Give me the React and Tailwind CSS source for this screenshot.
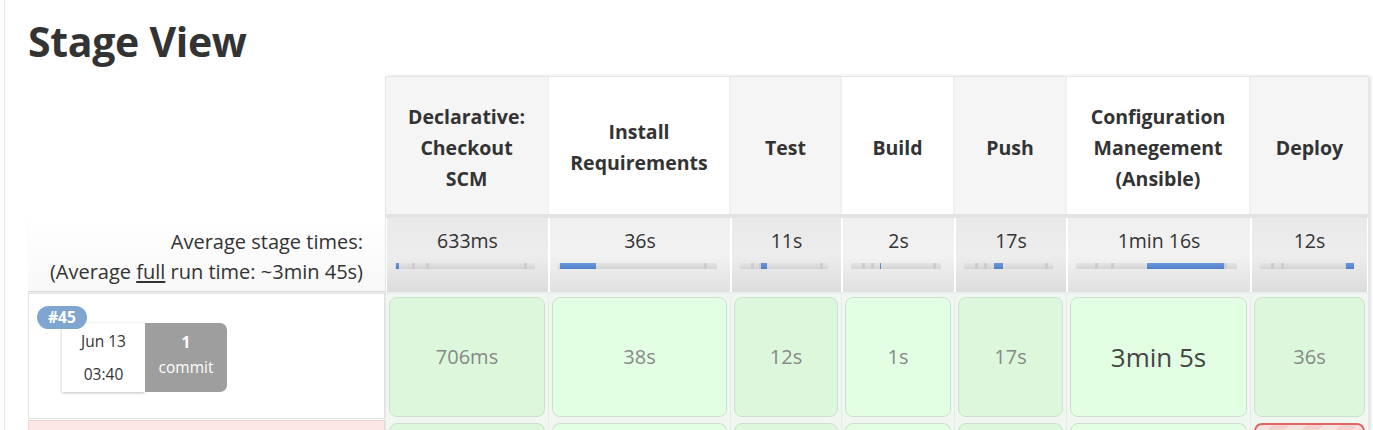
import React from "react";

const stages = [
  { name: ["Declarative:", "Checkout", "SCM"], w: "w-[163px]", head: "bg-[#f5f5f5]", avg: "633ms", bar: [1, 2], run: "706ms", dark: true },
  { name: ["Install", "Requirements"], w: "w-[182px]", head: "bg-white", avg: "36s", bar: [1, 23], run: "38s", dark: false },
  { name: ["Test"], w: "w-[111px]", head: "bg-[#f5f5f5]", avg: "11s", bar: [24, 7], run: "12s", dark: true },
  { name: ["Build"], w: "w-[113px]", head: "bg-white", avg: "2s", bar: [32, 1], run: "1s", dark: false },
  { name: ["Push"], w: "w-[112px]", head: "bg-[#f5f5f5]", avg: "17s", bar: [34, 10], run: "17s", dark: true },
  { name: ["Configuration", "Manegement", "(Ansible)"], w: "w-[184px]", head: "bg-white", avg: "1min 16s", bar: [44, 48], run: "3min 5s", dark: false, big: true },
  { name: ["Deploy"], w: "w-[117px]", head: "bg-[#f5f5f5]", avg: "12s", bar: [92, 8], run: "36s", dark: true, failNext: true },
];

function Bar({ left, width }) {
  return (
    <div className="relative h-[6px] ml-[8px] mr-[13px] bg-gradient-to-b from-[#e4e4e4] to-[#d4d4d4]">
      <div className="absolute top-0 bottom-0 left-[12%] w-[3px] bg-[#cdcdcd]" />
      <div className="absolute top-0 bottom-0 left-[22%] w-[3px] bg-[#cdcdcd]" />
      <div className="absolute top-0 bottom-0 right-[6%] w-[3px] bg-[#cdcdcd]" />
      <div
        className="absolute top-0 bottom-0 bg-gradient-to-b from-[#6b98dc] to-[#4f7fc9]"
        style={{ left: `${left}%`, width: `${width}%`, minWidth: "1px" }}
      />
    </div>
  );
}

export default function App() {
  return (
    <div
      className="h-[430px] overflow-hidden bg-white pl-[4px] text-[#333]"
      style={{ fontFamily: '"Open Sans", "Noto Sans", sans-serif' }}
    >
      <div className="h-full border-l border-[#e4ebee] pl-[23px]">
        <h2 className="pt-[15px] h-[76px] text-[41px] font-bold leading-[52px] tracking-[-0.3px]">
          Stage View
        </h2>

        <div className="flex">
          {/* left column */}
          <div className="w-[357px] shrink-0">
            <div className="h-[142px]" />
            <div className="h-[74px] border-b border-[#d8d8d8] bg-gradient-to-b from-white to-[#f8f8f8] pr-[22px] pt-[9px] text-right text-[20px] leading-[30px] shadow-[0_1px_1px_rgba(0,0,0,0.06)]">
              <div>Average stage times:</div>
              <div>
                (Average <span className="underline underline-offset-2">full</span> run time: ~3min 45s)
              </div>
            </div>
            <div className="relative mt-[1px] h-[126px] border border-[#e2e2e2] bg-white">
              <span className="absolute left-[8px] top-[12px] z-10 rounded-full bg-[#7fa6d1] px-[11px] text-[15.5px] font-bold leading-[23px] text-white">
                #45
              </span>
              <div className="absolute left-[33px] top-[29px] flex h-[69px]">
                <div className="flex w-[83px] flex-col items-center justify-center gap-[8px] bg-white text-[15.5px] leading-[25px] shadow-[0_1px_3px_rgba(0,0,0,0.25)]">
                  <span>Jun 13</span>
                  <span>03:40</span>
                </div>
                <div className="flex w-[82px] flex-col items-center justify-center rounded-r-[7px] bg-[#9e9e9e] pb-[6px] text-[15.5px] leading-[25px] text-white">
                  <span className="font-bold">1</span>
                  <span>commit</span>
                </div>
              </div>
            </div>
            <div className="mt-[1px] h-[126px] border border-[#f0d6d2] bg-[#fde7e4]" />
          </div>

          {/* stage table */}
          <div className="shrink-0 border border-[#e1e7ea] bg-white shadow-[2px_0_3px_rgba(0,0,0,0.12)]">
            <div className="flex border-b-[4px] border-[#e3e3e3]">
              {stages.map((s, i) => (
                <div
                  key={i}
                  className={`${s.w} ${s.head} flex h-[137px] flex-col items-center justify-center border-r-2 border-[#f0f0f0] pt-[3px] text-center text-[19.5px] font-bold leading-[31px] last:border-r-0`}
                >
                  {s.name.map((n) => (
                    <span key={n}>{n}</span>
                  ))}
                </div>
              ))}
            </div>

            <div className="flex">
              {stages.map((s, i) => (
                <div
                  key={i}
                  className={`${s.w} h-[74px] border-x border-white bg-gradient-to-b ${
                    s.dark ? "from-[#e9e9e9] via-[#ededed] to-[#dcdcdc]" : "from-[#efefef] via-[#f2f2f2] to-[#e0e0e0]"
                  } pt-[10px] text-center`}
                >
                  <div className="text-[19.5px] leading-[26px]">{s.avg}</div>
                  <div className="mt-[9px]">
                    <Bar left={s.bar[0]} width={s.bar[1]} />
                  </div>
                </div>
              ))}
            </div>

            <div className="flex border-t-2 border-[#eeeeee]">
              {stages.map((s, i) => (
                <div key={i} className={`${s.w} h-[126px] border-r border-[#e9e9e9] bg-[#f0f7f0] p-[3px] last:border-r-0`}>
                  <div
                    className={`flex h-full items-center justify-center rounded-[8px] border border-[#cfdfcf] ${
                      s.dark ? "bg-[#dcf7dc]" : "bg-[#e3ffe3]"
                    } ${s.big ? "text-[26px] text-[#444]" : "text-[20px] text-[#888]"}`}
                  >
                    {s.run}
                  </div>
                </div>
              ))}
            </div>

            <div className="flex">
              {stages.map((s, i) => (
                <div key={i} className={`${s.w} h-[126px] border-r border-[#e9e9e9] bg-[#f0f7f0] p-[3px] last:border-r-0`}>
                  <div
                    className={`h-full rounded-[8px] border ${
                      s.failNext
                        ? "border-2 border-[#e06666] bg-[repeating-linear-gradient(135deg,#fbe1e1_0px,#fbe1e1_12px,#f6cfcf_12px,#f6cfcf_24px)]"
                        : `border-[#cfdfcf] ${s.dark ? "bg-[#dcf7dc]" : "bg-[#e3ffe3]"}`
                    }`}
                  />
                </div>
              ))}
            </div>
          </div>
        </div>
      </div>
    </div>
  );
}
